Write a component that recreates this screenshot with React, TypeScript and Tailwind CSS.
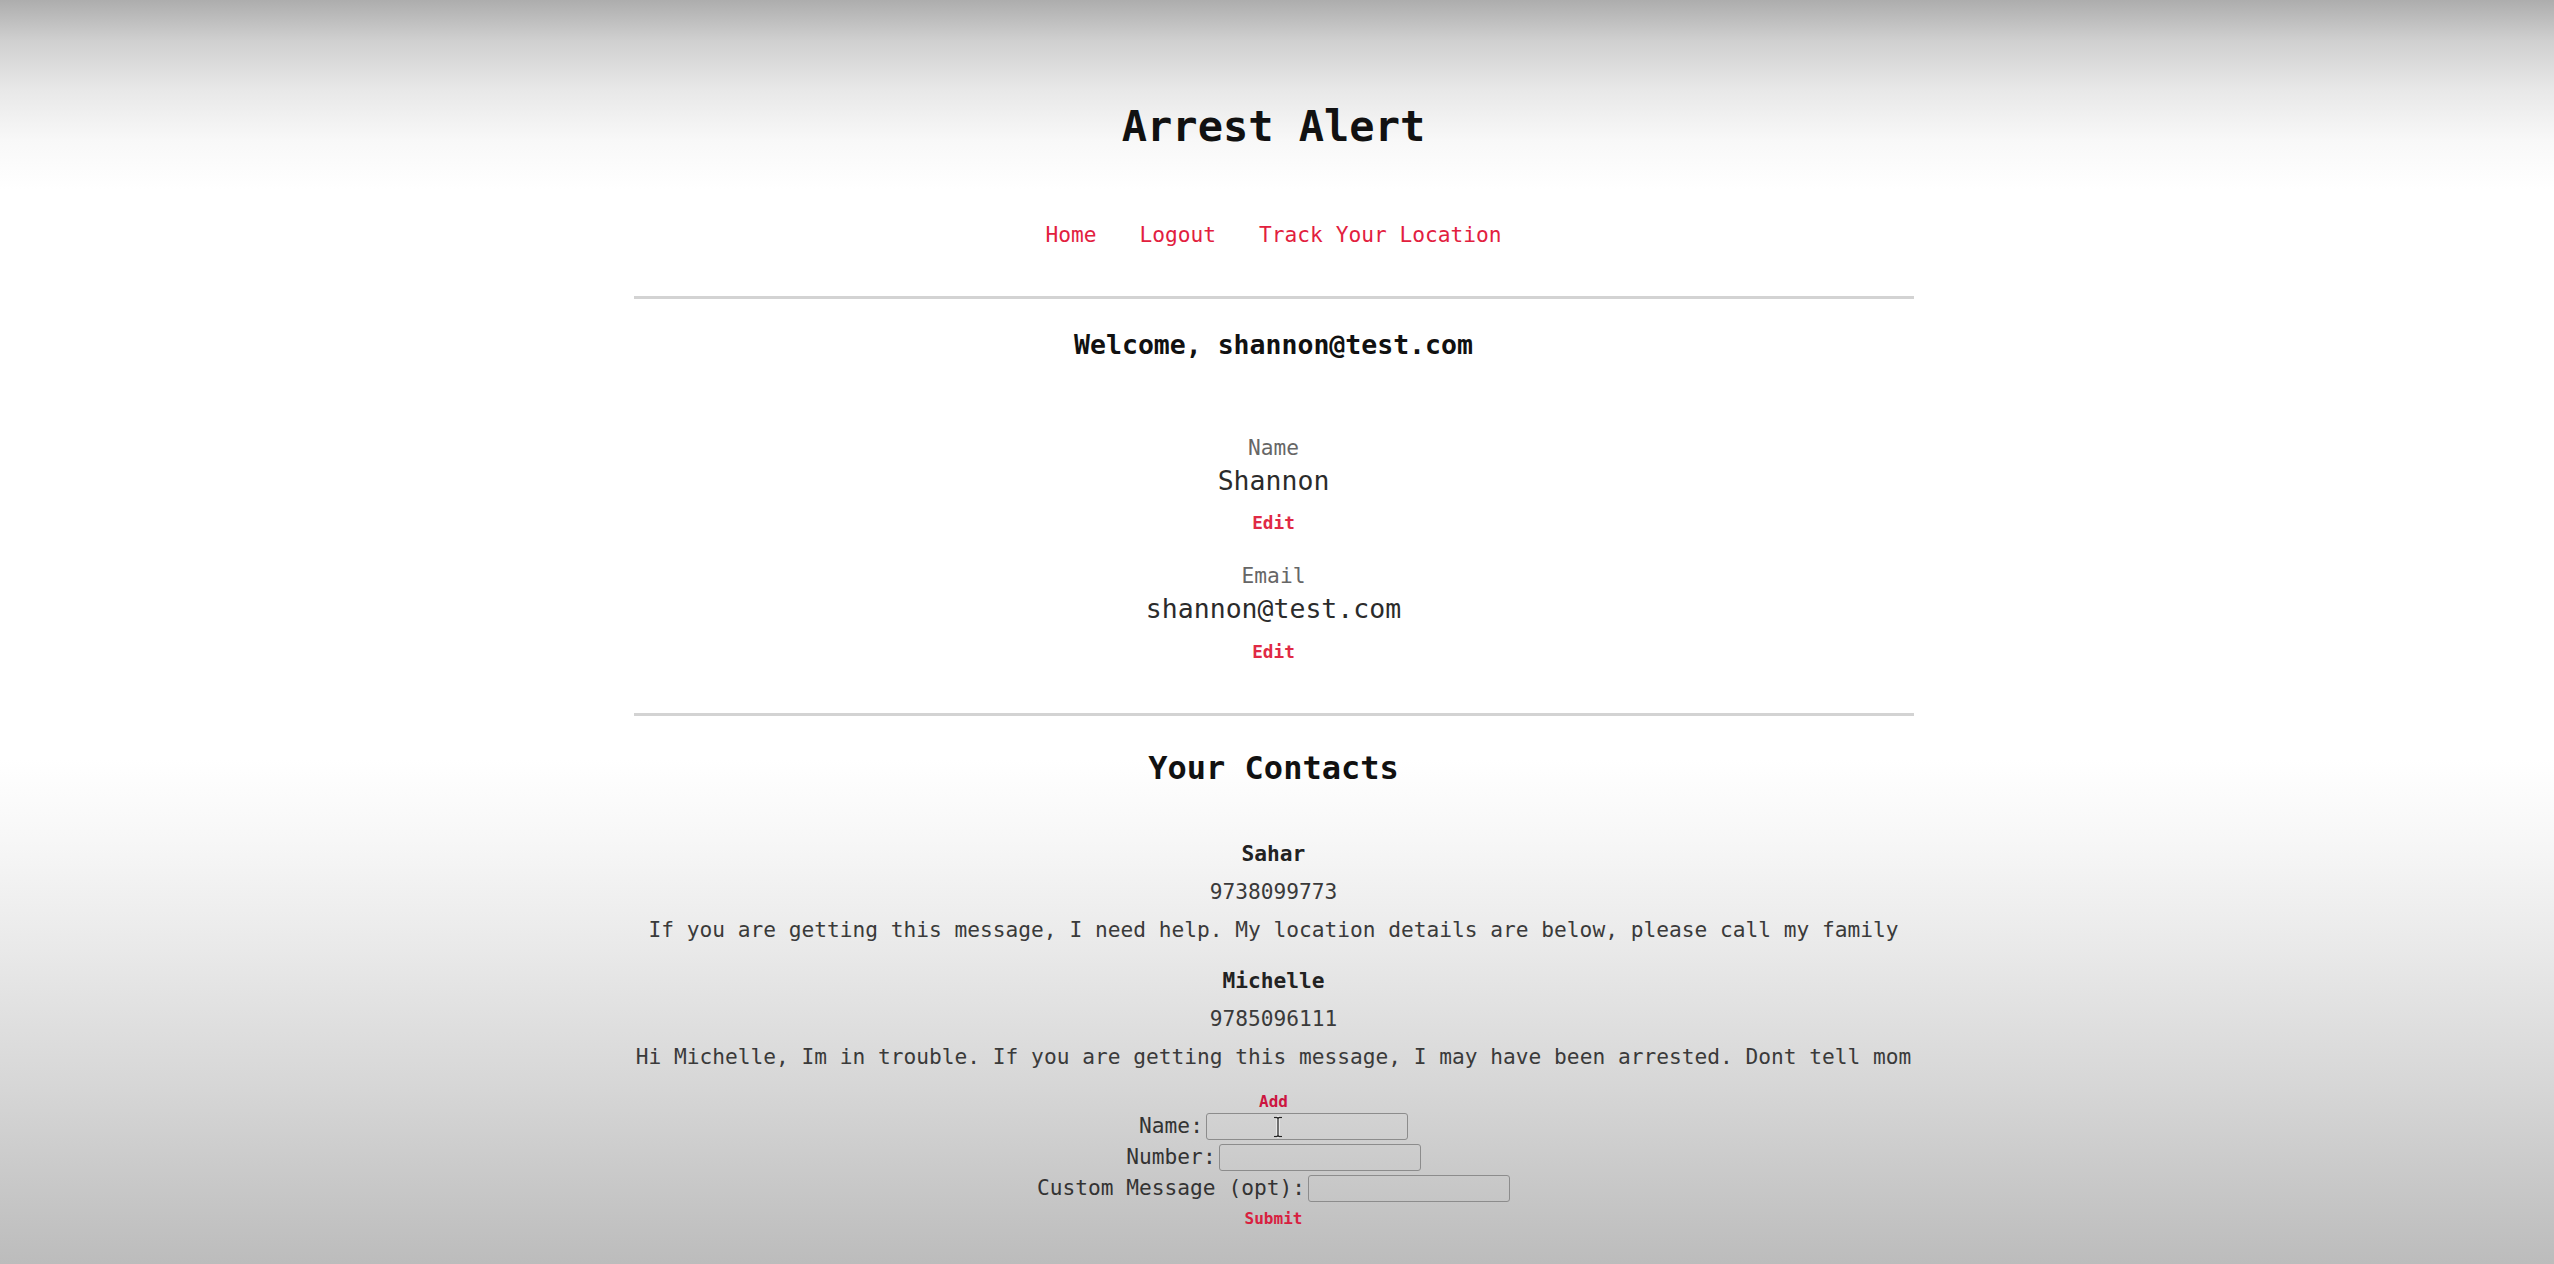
const contacts = [
  {
    name: "Sahar",
    number: "9738099773",
    message: "If you are getting this message, I need help. My location details are below, please call my family",
  },
  {
    name: "Michelle",
    number: "9785096111",
    message: "Hi Michelle, Im in trouble. If you are getting this message, I may have been arrested. Dont tell mom",
  },
];

function IBeam() {
  return (
    <svg className="pointer-events-none absolute left-[66px] top-[3px]" width="12" height="22" viewBox="0 0 12 22">
      <path d="M2 1.5h3l1 1 1-1h3M6 2.5v17M2 20.5h3l1-1 1 1h3" fill="none" stroke="#fff" strokeWidth="3" />
      <path d="M2 1.5h3l1 1 1-1h3M6 2.5v17M2 20.5h3l1-1 1 1h3" fill="none" stroke="#222" strokeWidth="1.3" />
    </svg>
  );
}

function Field({ label, cursor }: { label: string; cursor?: boolean }) {
  return (
    <div className="flex h-[28px] items-center justify-center">
      <label className="text-[21.2px] leading-[26px] text-[#333]">{label}:</label>
      <div className="relative ml-[3px]">
        <input className="h-[27px] w-[202px] rounded-[3px] border border-[#8c8c8c] bg-transparent outline-none" />
        {cursor && <IBeam />}
      </div>
    </div>
  );
}

export default function App() {
  return (
    <div className="h-[1264px] w-full overflow-hidden bg-[linear-gradient(to_bottom,#adadad_0px,#cfcfcf_40px,#e8e8e8_90px,#f8f8f8_140px,#ffffff_190px,#ffffff_760px,#f7f7f7_840px,#e9e9e9_950px,#d6d6d6_1090px,#bcbcbc_1264px)] pr-[7px] font-['DejaVu_Sans_Mono','Liberation_Mono',monospace] text-[#222]">
      <div className="mx-auto flex w-[1280px] flex-col items-center pt-[101px]">
        <h1 className="text-[42px] leading-[51px] font-bold text-[#111]">Arrest Alert</h1>

        <nav className="mt-[67px] flex gap-[43px] text-[21.2px] leading-[32px] text-[#e2203e]">
          <a href="#">Home</a>
          <a href="#">Logout</a>
          <a href="#">Track Your Location</a>
        </nav>

        <div className="mt-[45px] h-[3px] w-full bg-[#d3d3d3]" />

        <p className="mt-[30px] text-[26.5px] leading-[32px] font-bold text-[#111]">Welcome, shannon@test.com</p>

        <span className="mt-[74px] text-[21.2px] leading-[26px] text-[#666]">Name</span>
        <span className="mt-[4px] text-[26.5px] leading-[32px] text-[#2b2b2b]">Shannon</span>
        <a href="#" className="mt-[16px] text-[17.7px] leading-[21px] font-bold text-[#e02a45]">Edit</a>

        <span className="mt-[29px] text-[21.2px] leading-[26px] text-[#666]">Email</span>
        <span className="mt-[4px] text-[26.5px] leading-[32px] text-[#2b2b2b]">shannon@test.com</span>
        <a href="#" className="mt-[17px] text-[17.7px] leading-[21px] font-bold text-[#e02a45]">Edit</a>

        <div className="mt-[50px] h-[3px] w-full bg-[#d3d3d3]" />

        <h2 className="mt-[33px] text-[32px] leading-[39px] font-bold text-[#111]">Your Contacts</h2>

        <div className="mt-[53px] flex flex-col items-center gap-[25px]">
          {contacts.map((c) => (
            <div key={c.name} className="flex flex-col items-center gap-[12px] text-[21.2px] leading-[26px] text-[#3a3a3a]">
              <span className="font-bold text-[#222]">{c.name}</span>
              <span>{c.number}</span>
              <span className="whitespace-nowrap">{c.message}</span>
            </div>
          ))}
        </div>

        <a href="#" className="mt-[22px] text-[16px] leading-[20px] font-bold text-[#cc1540]">Add</a>

        <form className="mt-0 flex flex-col gap-[3px]">
          <Field label="Name" cursor />
          <Field label="Number" />
          <Field label="Custom Message (opt)" />
        </form>

        <a href="#" className="mt-[7px] text-[16px] leading-[20px] font-bold text-[#d8203f]">Submit</a>
      </div>
    </div>
  );
}
